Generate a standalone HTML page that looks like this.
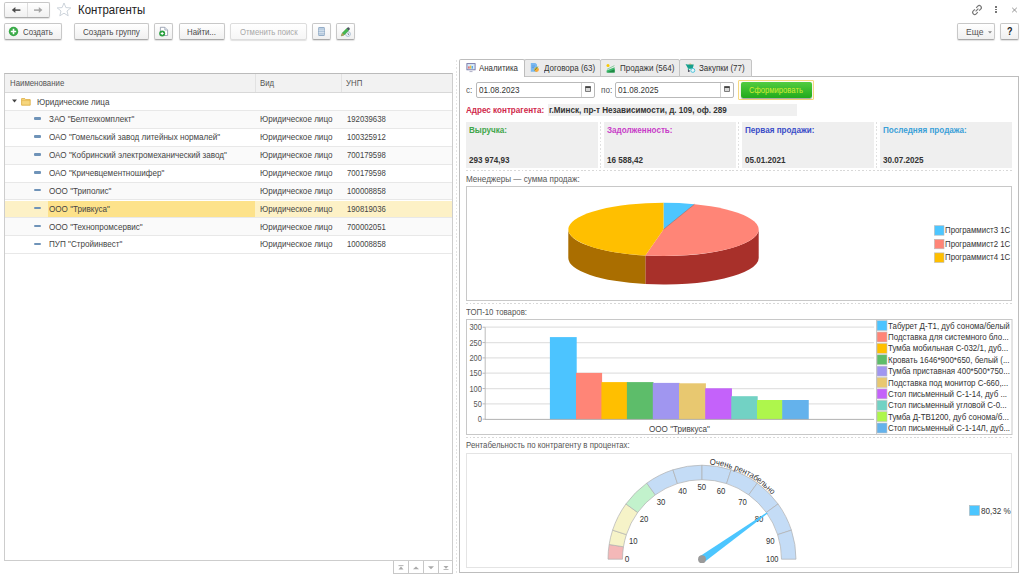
<!DOCTYPE html>
<html><head><meta charset="utf-8">
<style>
*{box-sizing:border-box;margin:0;padding:0}
html,body{width:1024px;height:578px;overflow:hidden;background:#fff;font-family:"Liberation Sans",sans-serif;font-size:8px;color:#333}
.a{position:absolute}
.btn{position:absolute;border:1px solid #c8c8c8;border-bottom-color:#aaa;border-radius:2px;background:linear-gradient(#fff,#f0f0f0);box-shadow:0 1px 1px rgba(0,0,0,.12);color:#404040;font-size:8px;line-height:14px;text-align:center;white-space:nowrap}
.t{position:absolute;white-space:nowrap;line-height:10px;font-size:9px;transform:scaleX(.9);transform-origin:0 0}
</style></head><body>

<!-- nav -->
<div class="btn" style="left:4px;top:2px;width:46px;height:16px"></div>
<div class="a" style="left:27px;top:3px;width:1px;height:14px;background:#ddd"></div>
<svg class="a" style="left:0;top:0" width="24" height="20" viewBox="0 0 24 20"><path d="M11.8 10.1L15.4 7.1V13.1Z" fill="#4a4a4a"/><rect x="14.6" y="9.35" width="5.8" height="1.5" fill="#4a4a4a"/></svg>
<svg class="a" style="left:28px;top:0" width="20" height="20" viewBox="28 0 20 20"><path d="M42.4 10.1L38.8 7.1V13.1Z" fill="#a6a6a6"/><rect x="34" y="9.35" width="5.6" height="1.5" fill="#a6a6a6"/></svg>
<svg class="a" style="left:56px;top:2.3px" width="16" height="15" viewBox="0 0 16 15"><path d="M8 1L9.9 5.6L14.8 5.9L11 9L12.2 13.8L8 11.2L3.8 13.8L5 9L1.2 5.9L6.1 5.6Z" stroke="#c4ccd4" stroke-width="0.85" fill="none"/></svg>
<div class="t" style="left:77.5px;top:3px;font-size:12px;line-height:14px;color:#222;transform:scaleX(.95)">Контрагенты</div>

<!-- top right icons -->
<svg class="a" style="left:971px;top:4px" width="12" height="12" viewBox="0 0 12 12"><g stroke="#777" stroke-width="1.2" fill="none"><path d="M5.2 3.8L6.8 2.2a1.9 1.9 0 0 1 2.9 2.9L8.1 6.7"/><path d="M6.8 8.2L5.2 9.8a1.9 1.9 0 0 1 -2.9 -2.9L3.9 5.3"/><path d="M4.6 7.4L7.4 4.6"/></g></svg>
<div class="a" style="left:995.3px;top:6.3px;width:1.6px;height:1.6px;background:#777"></div>
<div class="a" style="left:995.3px;top:8.8px;width:1.6px;height:1.6px;background:#777"></div>
<div class="a" style="left:995.3px;top:11.3px;width:1.6px;height:1.6px;background:#777"></div>
<svg class="a" style="left:1011px;top:7px" width="7" height="6" viewBox="0 0 7 6"><path d="M1.2 0.8L5.8 5.2M5.8 0.8L1.2 5.2" stroke="#888" stroke-width="0.9"/></svg>

<!-- toolbar -->
<div class="btn" style="left:4px;top:23px;width:58px;height:17px"></div>
<svg class="a" style="left:8px;top:26px" width="11" height="11" viewBox="0 0 11 11"><circle cx="5.5" cy="5.5" r="4.7" fill="#3aaa48"/><path d="M5.5 2.8V8.2M2.8 5.5H8.2" stroke="#fff" stroke-width="1.6"/></svg>
<div class="t" style="left:22.9px;top:26.3px;color:#4a4a4a;font-size:9.8px;line-height:11px;transform:scaleX(.8)">Создать</div>
<div class="btn" style="left:74px;top:23px;width:75px;height:17px"></div>
<div class="t" style="left:83px;top:26.3px;color:#4a4a4a;font-size:9.8px;line-height:11px;transform:scaleX(.82)">Создать группу</div>
<div class="btn" style="left:154px;top:23px;width:19px;height:17px"></div>
<svg class="a" style="left:157px;top:25px" width="13" height="13" viewBox="0 0 13 13"><path d="M3.4 2.3H7.8L10.6 5.1V10.5H3.4Z" fill="#fff" stroke="#8a94a6" stroke-width="0.8"/><path d="M7.8 2.3V5.1H10.6" fill="#dde3ec" stroke="#8a94a6" stroke-width="0.6"/><circle cx="5.2" cy="8.5" r="3" fill="#2aa040"/><path d="M5.2 7V10M3.7 8.5H6.7" stroke="#fff" stroke-width="1"/></svg>
<div class="btn" style="left:179px;top:23px;width:46px;height:17px"></div>
<div class="t" style="left:187.3px;top:26.3px;color:#4a4a4a;font-size:9.8px;line-height:11px;transform:scaleX(.8)">Найти...</div>
<div class="btn" style="left:230px;top:23px;width:77px;height:17px;border-color:#ddd;background:linear-gradient(#fff,#f6f6f6)"></div>
<div class="t" style="left:239.8px;top:26.3px;color:#a8a8a8;font-size:9.8px;line-height:11px;transform:scaleX(.79)">Отменить поиск</div>
<div class="btn" style="left:312px;top:23px;width:19px;height:17px"></div>
<svg class="a" style="left:318px;top:27px" width="7" height="9" viewBox="0 0 7 9"><rect x="0.4" y="0.3" width="6.2" height="8.4" rx="1.3" fill="#9fb8d2" stroke="#7a98b8" stroke-width="0.7"/><path d="M0.6 2H6.4M0.6 3.7H6.4M0.6 5.4H6.4M0.6 7.1H6.4" stroke="#eef4fa" stroke-width="0.75"/></svg>
<div class="btn" style="left:336px;top:23px;width:19px;height:17px"></div>
<svg class="a" style="left:340px;top:26px" width="12" height="12" viewBox="0 0 12 12"><circle cx="8" cy="8" r="2.4" fill="#f4f8fc" stroke="#9ab4cc" stroke-width="0.8"/><path d="M8 6.8V8.2L9 8.8" stroke="#445" stroke-width="0.6" fill="none"/><path d="M1.2 10L2.2 7L6.6 2.6L8.6 4.6L4.2 9Z" fill="#44b84e" stroke="#2f8f3a" stroke-width="0.4"/><path d="M6.6 2.6L7.6 1.6a1 1 0 0 1 1.4 0L9.6 2.2a1 1 0 0 1 0 1.4L8.6 4.6Z" fill="#4a5560"/><path d="M1.2 10L2.2 7L4.2 9Z" fill="#c8965a"/></svg>

<div class="btn" style="left:957px;top:23px;width:38px;height:17px"></div>
<div class="t" style="left:965.7px;top:27px;color:#555;font-size:9.5px">Еще</div>
<svg class="a" style="left:987.5px;top:30.5px" width="4" height="3" viewBox="0 0 4 3"><path d="M0 0.2H4L2 2.4Z" fill="#888"/></svg>
<div class="btn" style="left:1000px;top:23px;width:19px;height:17px"></div>
<div class="t" style="left:1006.5px;top:27px;font-weight:bold;font-size:10px;color:#222">?</div>

<!-- table -->
<div class="a" style="left:4px;top:73px;width:449px;height:488px;border:1px solid #cdcdcd;border-top-color:#bbb;background:#fff"></div>
<div class="a" style="left:5px;top:74px;width:447px;height:18.6px;background:#f2f2f2;border-bottom:1px solid #d8d8d8"></div>
<div class="a" style="left:255px;top:74px;width:1px;height:18px;background:#e2e2e2"></div>
<div class="a" style="left:341px;top:74px;width:1px;height:18px;background:#e2e2e2"></div>
<div class="t" style="left:10px;top:77.6px;color:#555;transform:scaleX(.87)">Наименование</div>
<div class="t" style="left:260px;top:77.6px;color:#555;transform:scaleX(.87)">Вид</div>
<div class="t" style="left:346px;top:77.6px;color:#555;transform:scaleX(.87)">УНП</div>
<svg class="a" style="left:12px;top:99px" width="5" height="4" viewBox="0 0 5 4"><path d="M0 0.5H5L2.5 3.5Z" fill="#444"/></svg>
<svg class="a" style="left:21px;top:96.5px" width="10" height="9" viewBox="0 0 10 9"><path d="M0.6 1.6H3.8L4.8 2.6H9.2V8.2H0.6Z" fill="#f6d67e" stroke="#dcaa3c" stroke-width="0.8"/><path d="M0.6 3.6H9.2" stroke="#e2b44a" stroke-width="0.6"/></svg>
<div class="t" style="left:37px;top:96.8px;color:#444">Юридические лица</div>
<div class="a" style="left:5px;top:110px;width:447px;height:1px;background:#e8e8e8"></div>
<div class="a" style="left:5px;top:111.00px;width:447px;height:16.89px;background:#fafafa"></div>
<div class="a" style="left:5px;top:127.89px;width:447px;height:1px;background:#e8e8e8"></div>
<div class="a" style="left:34px;top:117.30px;width:7px;height:2.6px;background:#6f93b8;border-radius:1px"></div>
<div class="t" style="left:49px;top:114.20px;color:#444">ЗАО "Белтехкомплект"</div>
<div class="t" style="left:260px;top:114.20px;color:#444">Юридическое лицо</div>
<div class="t" style="left:347px;top:114.20px;color:#444;transform:scaleX(.86)">192039638</div>
<div class="a" style="left:5px;top:145.78px;width:447px;height:1px;background:#e8e8e8"></div>
<div class="a" style="left:34px;top:135.19px;width:7px;height:2.6px;background:#6f93b8;border-radius:1px"></div>
<div class="t" style="left:49px;top:132.09px;color:#444">ОАО "Гомельский завод литейных нормалей"</div>
<div class="t" style="left:260px;top:132.09px;color:#444">Юридическое лицо</div>
<div class="t" style="left:347px;top:132.09px;color:#444;transform:scaleX(.86)">100325912</div>
<div class="a" style="left:5px;top:146.78px;width:447px;height:16.89px;background:#fafafa"></div>
<div class="a" style="left:5px;top:163.67px;width:447px;height:1px;background:#e8e8e8"></div>
<div class="a" style="left:34px;top:153.08px;width:7px;height:2.6px;background:#6f93b8;border-radius:1px"></div>
<div class="t" style="left:49px;top:149.98px;color:#444">ОАО "Кобринский электромеханический завод"</div>
<div class="t" style="left:260px;top:149.98px;color:#444">Юридическое лицо</div>
<div class="t" style="left:347px;top:149.98px;color:#444;transform:scaleX(.86)">700179598</div>
<div class="a" style="left:5px;top:181.56px;width:447px;height:1px;background:#e8e8e8"></div>
<div class="a" style="left:34px;top:170.97px;width:7px;height:2.6px;background:#6f93b8;border-radius:1px"></div>
<div class="t" style="left:49px;top:167.87px;color:#444">ОАО "Кричевцементношифер"</div>
<div class="t" style="left:260px;top:167.87px;color:#444">Юридическое лицо</div>
<div class="t" style="left:347px;top:167.87px;color:#444;transform:scaleX(.86)">700179598</div>
<div class="a" style="left:5px;top:182.56px;width:447px;height:16.89px;background:#fafafa"></div>
<div class="a" style="left:5px;top:199.45px;width:447px;height:1px;background:#e8e8e8"></div>
<div class="a" style="left:34px;top:188.86px;width:7px;height:2.6px;background:#6f93b8;border-radius:1px"></div>
<div class="t" style="left:49px;top:185.76px;color:#444">ООО "Триполис"</div>
<div class="t" style="left:260px;top:185.76px;color:#444">Юридическое лицо</div>
<div class="t" style="left:347px;top:185.76px;color:#444;transform:scaleX(.86)">100008858</div>
<div class="a" style="left:5px;top:200.65px;width:447px;height:15.9px;background:#fdf1c6"></div>
<div class="a" style="left:47.6px;top:200.65px;width:207.4px;height:15.9px;background:#fde28a"></div>
<div class="a" style="left:5px;top:217.34px;width:447px;height:1px;background:#e8e8e8"></div>
<div class="a" style="left:34px;top:206.75px;width:7px;height:2.6px;background:#6f93b8;border-radius:1px"></div>
<div class="t" style="left:49px;top:203.65px;color:#444">ООО "Тривкуса"</div>
<div class="t" style="left:260px;top:203.65px;color:#444">Юридическое лицо</div>
<div class="t" style="left:347px;top:203.65px;color:#444;transform:scaleX(.86)">190819036</div>
<div class="a" style="left:5px;top:218.34px;width:447px;height:16.89px;background:#fafafa"></div>
<div class="a" style="left:5px;top:235.23px;width:447px;height:1px;background:#e8e8e8"></div>
<div class="a" style="left:34px;top:224.64px;width:7px;height:2.6px;background:#6f93b8;border-radius:1px"></div>
<div class="t" style="left:49px;top:221.54px;color:#444">ООО "Технопромсервис"</div>
<div class="t" style="left:260px;top:221.54px;color:#444">Юридическое лицо</div>
<div class="t" style="left:347px;top:221.54px;color:#444;transform:scaleX(.86)">700002051</div>
<div class="a" style="left:5px;top:253.12px;width:447px;height:1px;background:#e8e8e8"></div>
<div class="a" style="left:34px;top:242.53px;width:7px;height:2.6px;background:#6f93b8;border-radius:1px"></div>
<div class="t" style="left:49px;top:239.43px;color:#444">ПУП "Стройинвест"</div>
<div class="t" style="left:260px;top:239.43px;color:#444">Юридическое лицо</div>
<div class="t" style="left:347px;top:239.43px;color:#444;transform:scaleX(.86)">100008858</div>
<div class="a" style="left:393px;top:561px;width:60px;height:13px;border:1px solid #c8c8c8;border-top:none;background:#fff"></div>
<div class="a" style="left:408px;top:561px;width:1px;height:13px;background:#c8c8c8"></div>
<div class="a" style="left:423px;top:561px;width:1px;height:13px;background:#c8c8c8"></div>
<div class="a" style="left:438px;top:561px;width:1px;height:13px;background:#c8c8c8"></div>
<svg class="a" style="left:397px;top:564px" width="8" height="6" viewBox="0 0 8 6"><path d="M1.5 1.6H6.5" stroke="#aaa" stroke-width="0.9"/><path d="M1.5 5.4L4 2.6L6.5 5.4Z" fill="#aaa"/></svg>
<svg class="a" style="left:412px;top:564px" width="8" height="6" viewBox="0 0 8 6"><path d="M1 5.2L4 2.4L7 5.2Z" fill="#aaa"/></svg>
<svg class="a" style="left:427px;top:564px" width="8" height="6" viewBox="0 0 8 6"><path d="M1 2.2L4 5.2L7 2.2Z" fill="#aaa"/></svg>
<svg class="a" style="left:442px;top:564px" width="8" height="6" viewBox="0 0 8 6"><path d="M1.5 5.6H6.5" stroke="#aaa" stroke-width="0.9"/><path d="M1.5 2L4 4.8L6.5 2Z" fill="#aaa"/></svg>
<div class="a" style="left:455.5px;top:59.5px;width:1.5px;height:515px;background:repeating-linear-gradient(#e4e4e4 0 1.8px,transparent 1.8px 3.6px)"></div>
<!-- tabs -->
<div class="a" style="left:459px;top:76px;width:560px;height:497px;border:1px solid #bdbdbd;background:#fff"></div>
<div class="a" style="left:524px;top:59px;width:77px;height:18px;border:1px solid #c4c4c4;border-radius:2px 2px 0 0;background:#ebebeb"></div>
<div class="a" style="left:600px;top:59px;width:80px;height:18px;border:1px solid #c4c4c4;border-radius:2px 2px 0 0;background:#ebebeb"></div>
<div class="a" style="left:679px;top:59px;width:73px;height:18px;border:1px solid #c4c4c4;border-radius:2px 2px 0 0;background:#ebebeb"></div>
<div class="a" style="left:459px;top:59px;width:65.5px;height:18px;border:1px solid #bdbdbd;border-bottom:none;border-radius:2px 2px 0 0;background:#fff"></div>
<div class="a" style="left:460px;top:76px;width:64px;height:2px;background:#fff"></div>
<svg class="a" style="left:465.5px;top:63px" width="10" height="10" viewBox="0 0 10 10"><rect x="0.9" y="0.6" width="8.2" height="6.2" fill="#d8ecfb" stroke="#7474a4" stroke-width="0.9"/><rect x="2.2" y="3.4" width="1.4" height="2.2" fill="#e85858"/><rect x="3.9" y="2.6" width="1.4" height="3" fill="#f0c040"/><rect x="5.6" y="3" width="1.4" height="2.6" fill="#5aa8e8"/><path d="M3.5 8.6H6.5" stroke="#9a9ab8" stroke-width="0.8"/></svg>
<div class="t" style="left:479px;top:63px;color:#333;transform:scaleX(.875)">Аналитика</div>
<svg class="a" style="left:530px;top:62px" width="10" height="11" viewBox="0 0 10 11"><path d="M0.8 1H5.4L7 2.6V9.8H0.8Z" fill="#7ab8f0"/><path d="M1.8 4H5M1.8 5.6H4" stroke="#4a90d8" stroke-width="0.6"/><circle cx="6.6" cy="7.6" r="2.3" fill="#f8a838"/><path d="M4.6 8.4L7.8 4.6" stroke="#3a9a3a" stroke-width="0.9"/></svg>
<div class="t" style="left:543.5px;top:63px;color:#333;transform:scaleX(.89)">Договора (63)</div>
<svg class="a" style="left:606px;top:63px" width="10" height="10" viewBox="0 0 10 10"><circle cx="2" cy="2.4" r="1.5" fill="#f8c800"/><path d="M0.6 9.4V7.6L8.6 4.2V9.4Z" fill="#3cb86a"/><path d="M0.6 9.4L8.6 6.2V9.4Z" fill="#1f8a44"/><path d="M1 6.4L8.4 2.6" stroke="#60c080" stroke-width="0.7" fill="none"/></svg>
<div class="t" style="left:620px;top:63px;color:#333;transform:scaleX(.89)">Продажи (564)</div>
<svg class="a" style="left:685px;top:62px" width="11" height="11" viewBox="0 0 11 11"><path d="M3.5 2.6L5 1.4L7.5 2.6Z" fill="#f8a838"/><path d="M0.5 2L2.2 2.6H8.8L7.6 6.8H3.2Z" fill="#16a08c"/><path d="M3.2 6.8L3.6 8.4" stroke="#16a08c" stroke-width="1"/><circle cx="3.8" cy="9" r="0.9" fill="#445"/><circle cx="7.8" cy="8.4" r="2" fill="#eaf6fa" stroke="#40c0d8" stroke-width="0.9"/></svg>
<div class="t" style="left:699px;top:63px;color:#333;transform:scaleX(.89)">Закупки (77)</div>
<div class="t" style="left:466px;top:85px;color:#555">с:</div>
<div class="a" style="left:476px;top:82px;width:119px;height:16px;border:1px solid #b9b9b9;border-radius:2px;background:#fff"></div>
<div class="a" style="left:581px;top:83px;width:1px;height:14px;background:#d0d0d0"></div>
<div class="t" style="left:479px;top:85px;color:#333">01.08.2023</div>
<svg class="a" style="left:585px;top:86px" width="6" height="6" viewBox="0 0 6 6"><rect x="0.4" y="0.4" width="5.2" height="5.2" rx="0.6" fill="#d6d6d6" stroke="#555" stroke-width="0.8"/><rect x="0.4" y="0.4" width="5.2" height="1.6" fill="#444"/></svg>
<div class="t" style="left:601px;top:85px;color:#555">по:</div>
<div class="a" style="left:615px;top:82px;width:119px;height:16px;border:1px solid #b9b9b9;border-radius:2px;background:#fff"></div>
<div class="a" style="left:720px;top:83px;width:1px;height:14px;background:#d0d0d0"></div>
<div class="t" style="left:618px;top:85px;color:#333">01.08.2025</div>
<svg class="a" style="left:724px;top:86px" width="6" height="6" viewBox="0 0 6 6"><rect x="0.4" y="0.4" width="5.2" height="5.2" rx="0.6" fill="#d6d6d6" stroke="#555" stroke-width="0.8"/><rect x="0.4" y="0.4" width="5.2" height="1.6" fill="#444"/></svg>
<div class="a" style="left:738px;top:79.5px;width:76px;height:20.5px;border:1px solid #f6d980;border-radius:1px;background:#fffdf4"></div>
<div class="a" style="left:740.5px;top:82px;width:71.5px;height:15.5px;border-radius:2px;background:linear-gradient(#52cc40,#22aa1c);box-shadow:0 1px 1px rgba(0,0,0,.35)"></div>
<div class="t" style="left:749px;top:84.5px;color:#d2ec34;transform:scaleX(.85)">Сформировать</div>
<div class="t" style="left:466px;top:105px;color:#d0284a;font-weight:bold">Адрес контрагента:</div>
<div class="a" style="left:548px;top:104px;width:249px;height:12px;background:#f0f0f0"></div>
<div class="t" style="left:549px;top:105px;color:#333;font-weight:bold">г.Минск, пр-т Независимости, д. 109, оф. 289</div>
<div class="a" style="left:466px;top:122px;width:132px;height:46px;background:#efefef"></div>
<div class="t" style="left:469px;top:125px;color:#3fa64a;font-weight:bold">Выручка:</div>
<div class="t" style="left:469px;top:155px;color:#333;font-weight:bold">293 974,93</div>
<div class="a" style="left:604px;top:122px;width:132px;height:46px;background:#efefef"></div>
<div class="t" style="left:607px;top:125px;color:#c83cc8;font-weight:bold">Задолженность:</div>
<div class="t" style="left:607px;top:155px;color:#333;font-weight:bold">16 588,42</div>
<div class="a" style="left:742px;top:122px;width:132px;height:46px;background:#efefef"></div>
<div class="t" style="left:745px;top:125px;color:#3a4cc8;font-weight:bold">Первая продажи:</div>
<div class="t" style="left:745px;top:155px;color:#333;font-weight:bold">05.01.2021</div>
<div class="a" style="left:880px;top:122px;width:132px;height:46px;background:#efefef"></div>
<div class="t" style="left:883px;top:125px;color:#3aa0d8;font-weight:bold">Последняя продажа:</div>
<div class="t" style="left:883px;top:155px;color:#333;font-weight:bold">30.07.2025</div>
<div class="a" style="left:600px;top:122px;width:1px;height:47px;background:repeating-linear-gradient(#e0e0e0 0 1.8px,transparent 1.8px 3.7px)"></div>
<div class="a" style="left:738px;top:122px;width:1px;height:47px;background:repeating-linear-gradient(#e0e0e0 0 1.8px,transparent 1.8px 3.7px)"></div>
<div class="a" style="left:876px;top:122px;width:1px;height:47px;background:repeating-linear-gradient(#e0e0e0 0 1.8px,transparent 1.8px 3.7px)"></div>
<div class="a" style="left:466px;top:170px;width:546px;height:1px;background:repeating-linear-gradient(90deg,#d8d8d8 0 1.8px,transparent 1.8px 3.7px)"></div>
<div class="t" style="left:466px;top:174px;color:#555">Менеджеры — сумма продаж:</div>
<div class="a" style="left:466px;top:186px;width:546px;height:115px;border:1px solid #c8c8c8;background:#fff"></div>
<div class="a" style="left:466px;top:303px;width:546px;height:1px;background:repeating-linear-gradient(90deg,#d8d8d8 0 1.8px,transparent 1.8px 3.7px)"></div>
<div class="t" style="left:466px;top:307px;color:#555;transform:scaleX(.87)">ТОП-10 товаров:</div>
<div class="a" style="left:466px;top:319px;width:546px;height:116px;border:1px solid #c8c8c8;background:#fff"></div>
<div class="a" style="left:466px;top:437.2px;width:546px;height:1px;background:repeating-linear-gradient(90deg,#d8d8d8 0 1.8px,transparent 1.8px 3.7px)"></div>
<div class="t" style="left:466px;top:440.2px;color:#555;transform:scaleX(.87)">Рентабельность по контрагенту в процентах:</div>
<div class="a" style="left:466px;top:452.5px;width:546px;height:115.5px;border:1px solid #e4e4e4;background:#fff"></div>
<!-- CHARTS -->
<svg class="a" style="left:0;top:0" width="1024" height="578" viewBox="0 0 1024 578" font-family="Liberation Sans">
<path d="M758.70 229.40 A95.2 26.6 0 0 1 645.33 255.51 L645.33 284.11 A95.2 26.6 0 0 0 758.70 258.00 Z" fill="#a8302a"/>
<path d="M645.33 255.51 A95.2 26.6 0 0 1 568.30 229.40 L568.30 258.00 A95.2 26.6 0 0 0 645.33 284.11 Z" fill="#aa6e00"/>
<path d="M663.5 229.4 L663.50 202.80 A95.2 26.6 0 0 1 694.49 204.25 Z" fill="#4dc6ff"/>
<path d="M663.5 229.4 L694.49 204.25 A95.2 26.6 0 0 1 645.33 255.51 Z" fill="#ff8577"/>
<path d="M663.5 229.4 L645.33 255.51 A95.2 26.6 0 0 1 663.50 202.80 Z" fill="#ffbf00"/>
<path d="M663.5 229.4 L694.49 204.25" stroke="#8a4a40" stroke-width="0.5"/>
<rect x="934.5" y="225.7" width="9.5" height="9.5" fill="#4dc6ff" stroke="#b8b8b8" stroke-width="0.6"/>
<rect x="934.5" y="239.3" width="9.5" height="9.5" fill="#ff8577" stroke="#b8b8b8" stroke-width="0.6"/>
<rect x="934.5" y="252.9" width="9.5" height="9.5" fill="#ffbf00" stroke="#b8b8b8" stroke-width="0.6"/>
<path d="M482.5 419.20H485" stroke="#aaa" stroke-width="0.8"/>
<path d="M485 403.87H874" stroke="#e2e2e2" stroke-width="1.2"/>
<path d="M482.5 403.87H485" stroke="#aaa" stroke-width="0.8"/>
<path d="M485 388.54H874" stroke="#e2e2e2" stroke-width="1.2"/>
<path d="M482.5 388.54H485" stroke="#aaa" stroke-width="0.8"/>
<path d="M485 373.21H874" stroke="#e2e2e2" stroke-width="1.2"/>
<path d="M482.5 373.21H485" stroke="#aaa" stroke-width="0.8"/>
<path d="M485 357.88H874" stroke="#e2e2e2" stroke-width="1.2"/>
<path d="M482.5 357.88H485" stroke="#aaa" stroke-width="0.8"/>
<path d="M485 342.55H874" stroke="#e2e2e2" stroke-width="1.2"/>
<path d="M482.5 342.55H485" stroke="#aaa" stroke-width="0.8"/>
<path d="M485 327.22H874" stroke="#e2e2e2" stroke-width="1.2"/>
<path d="M482.5 327.22H485" stroke="#aaa" stroke-width="0.8"/>
<path d="M485.2 327.2V419.5" stroke="#b4b4b4" stroke-width="0.9"/>
<rect x="549.9" y="337.1" width="26.80" height="82.30" fill="#4cc4ff"/>
<rect x="576" y="372.9" width="26.10" height="46.50" fill="#ff8577"/>
<rect x="601.4" y="382.1" width="26.20" height="37.30" fill="#ffbf00"/>
<rect x="626.9" y="382.1" width="26.60" height="37.30" fill="#5dbd6a"/>
<rect x="652.8" y="382.9" width="26.90" height="36.50" fill="#a096f0"/>
<rect x="679" y="383.3" width="26.90" height="36.10" fill="#e8c870"/>
<rect x="705.2" y="388.3" width="26.75" height="31.10" fill="#c462fa"/>
<rect x="731.25" y="396.2" width="26.45" height="23.20" fill="#72d2c4"/>
<rect x="757" y="400" width="25.90" height="19.40" fill="#aef64c"/>
<rect x="782.2" y="400" width="26.55" height="19.40" fill="#64b2ec"/>
<path d="M485 419.4H874" stroke="#a8a8a8" stroke-width="0.9"/>
<rect x="876.5" y="319.5" width="135.5" height="115" fill="#fff" stroke="#c8c8c8" stroke-width="1"/>
<rect x="877" y="320.60" width="10" height="10" fill="#4cc4ff" stroke="#c4c4c4" stroke-width="0.6"/>
<rect x="877" y="331.98" width="10" height="10" fill="#ff8577" stroke="#c4c4c4" stroke-width="0.6"/>
<rect x="877" y="343.36" width="10" height="10" fill="#ffbf00" stroke="#c4c4c4" stroke-width="0.6"/>
<rect x="877" y="354.74" width="10" height="10" fill="#5dbd6a" stroke="#c4c4c4" stroke-width="0.6"/>
<rect x="877" y="366.12" width="10" height="10" fill="#a096f0" stroke="#c4c4c4" stroke-width="0.6"/>
<rect x="877" y="377.50" width="10" height="10" fill="#e8c870" stroke="#c4c4c4" stroke-width="0.6"/>
<rect x="877" y="388.88" width="10" height="10" fill="#c462fa" stroke="#c4c4c4" stroke-width="0.6"/>
<rect x="877" y="400.26" width="10" height="10" fill="#72d2c4" stroke="#c4c4c4" stroke-width="0.6"/>
<rect x="877" y="411.64" width="10" height="10" fill="#aef64c" stroke="#c4c4c4" stroke-width="0.6"/>
<rect x="877" y="423.02" width="10" height="10" fill="#64b2ec" stroke="#c4c4c4" stroke-width="0.6"/>
<path d="M608.00 559.20 A94 94 0 0 1 609.16 544.50 L623.48 546.76 A79.5 79.5 0 0 0 622.50 559.20 Z" fill="#f4b8b8" stroke="#b0b0b0" stroke-width="0.7"/>
<path d="M609.16 544.50 A94 94 0 0 1 612.60 530.15 L626.39 534.63 A79.5 79.5 0 0 0 623.48 546.76 Z" fill="#f6f3c8" stroke="#b0b0b0" stroke-width="0.7"/>
<path d="M612.60 530.15 A94 94 0 0 1 625.95 503.95 L637.68 512.47 A79.5 79.5 0 0 0 626.39 534.63 Z" fill="#f6f3c8" stroke="#b0b0b0" stroke-width="0.7"/>
<path d="M625.95 503.95 A94 94 0 0 1 646.75 483.15 L655.27 494.88 A79.5 79.5 0 0 0 637.68 512.47 Z" fill="#c2f2cc" stroke="#b0b0b0" stroke-width="0.7"/>
<path d="M646.75 483.15 A94 94 0 0 1 672.95 469.80 L677.43 483.59 A79.5 79.5 0 0 0 655.27 494.88 Z" fill="#c4dcf6" stroke="#b0b0b0" stroke-width="0.7"/>
<path d="M672.95 469.80 A94 94 0 0 1 702.00 465.20 L702.00 479.70 A79.5 79.5 0 0 0 677.43 483.59 Z" fill="#c4dcf6" stroke="#b0b0b0" stroke-width="0.7"/>
<path d="M702.00 465.20 A94 94 0 0 1 731.05 469.80 L726.57 483.59 A79.5 79.5 0 0 0 702.00 479.70 Z" fill="#c4dcf6" stroke="#b0b0b0" stroke-width="0.7"/>
<path d="M731.05 469.80 A94 94 0 0 1 757.25 483.15 L748.73 494.88 A79.5 79.5 0 0 0 726.57 483.59 Z" fill="#c4dcf6" stroke="#b0b0b0" stroke-width="0.7"/>
<path d="M757.25 483.15 A94 94 0 0 1 778.05 503.95 L766.32 512.47 A79.5 79.5 0 0 0 748.73 494.88 Z" fill="#c4dcf6" stroke="#b0b0b0" stroke-width="0.7"/>
<path d="M778.05 503.95 A94 94 0 0 1 791.40 530.15 L777.61 534.63 A79.5 79.5 0 0 0 766.32 512.47 Z" fill="#c4dcf6" stroke="#b0b0b0" stroke-width="0.7"/>
<path d="M791.40 530.15 A94 94 0 0 1 796.00 559.20 L781.50 559.20 A79.5 79.5 0 0 0 777.61 534.63 Z" fill="#c4dcf6" stroke="#b0b0b0" stroke-width="0.7"/>
<path id="arcT" d="M709.62 464.51 A95 95 0 0 1 784.27 511.70" fill="none"/>
<text font-size="8.4" fill="#333"><textPath href="#arcT" textLength="71" lengthAdjust="spacingAndGlyphs">Очень рентабельно</textPath></text>
<text x="627" y="561.5" font-size="9" fill="#333" text-anchor="middle" textLength="4.6" lengthAdjust="spacingAndGlyphs">0</text>
<text x="633.2" y="543.5" font-size="9" fill="#333" text-anchor="middle" textLength="8.6" lengthAdjust="spacingAndGlyphs">10</text>
<text x="644" y="521.8" font-size="9" fill="#333" text-anchor="middle" textLength="8.6" lengthAdjust="spacingAndGlyphs">20</text>
<text x="661.1" y="505" font-size="9" fill="#333" text-anchor="middle" textLength="8.6" lengthAdjust="spacingAndGlyphs">30</text>
<text x="682.6" y="494" font-size="9" fill="#333" text-anchor="middle" textLength="8.6" lengthAdjust="spacingAndGlyphs">40</text>
<text x="701.8" y="490.2" font-size="9" fill="#333" text-anchor="middle" textLength="8.6" lengthAdjust="spacingAndGlyphs">50</text>
<text x="721" y="494" font-size="9" fill="#333" text-anchor="middle" textLength="8.6" lengthAdjust="spacingAndGlyphs">60</text>
<text x="742.6" y="505.2" font-size="9" fill="#333" text-anchor="middle" textLength="8.6" lengthAdjust="spacingAndGlyphs">70</text>
<text x="759" y="521.8" font-size="9" fill="#333" text-anchor="middle" textLength="8.6" lengthAdjust="spacingAndGlyphs">80</text>
<text x="770.2" y="543.6" font-size="9" fill="#333" text-anchor="middle" textLength="8.6" lengthAdjust="spacingAndGlyphs">90</text>
<text x="772.2" y="561.7" font-size="9" fill="#333" text-anchor="middle" textLength="12.4" lengthAdjust="spacingAndGlyphs">100</text>
<path d="M704.14 562.22 L767.60 513.57 L766.80 512.43 L699.86 556.18 Z" fill="#4cc6ff"/>
<circle cx="702" cy="559.2" r="3.9" fill="#9a9a9a"/>
<rect x="969.5" y="505.6" width="10" height="9.8" fill="#4cc6ff" stroke="#aaa" stroke-width="0.5"/>
</svg>
<div class="t" style="left:944.5px;top:225.2px;color:#333;transform:scaleX(.872)">Программист3 1С</div>
<div class="t" style="left:944.5px;top:238.8px;color:#333;transform:scaleX(.872)">Программист2 1С</div>
<div class="t" style="left:944.5px;top:252.4px;color:#333;transform:scaleX(.872)">Программист4 1С</div>
<div class="t" style="left:888px;top:320.6px;color:#333;transform:scaleX(.883)">Табурет Д-Т1, дуб сонома/белый</div>
<div class="t" style="left:888px;top:332.0px;color:#333;transform:scaleX(.883)">Подставка для системного бло...</div>
<div class="t" style="left:888px;top:343.4px;color:#333;transform:scaleX(.883)">Тумба мобильная С-032/1, дуб...</div>
<div class="t" style="left:888px;top:354.7px;color:#333;transform:scaleX(.883)">Кровать 1646*900*650, белый (...</div>
<div class="t" style="left:888px;top:366.1px;color:#333;transform:scaleX(.883)">Тумба приставная 400*500*750...</div>
<div class="t" style="left:888px;top:377.5px;color:#333;transform:scaleX(.883)">Подставка под монитор С-660,...</div>
<div class="t" style="left:888px;top:388.9px;color:#333;transform:scaleX(.883)">Стол письменный С-1-14, дуб ...</div>
<div class="t" style="left:888px;top:400.3px;color:#333;transform:scaleX(.883)">Стол письменный угловой С-0...</div>
<div class="t" style="left:888px;top:411.6px;color:#333;transform:scaleX(.883)">Тумба Д-ТВ1200, дуб сонома/б...</div>
<div class="t" style="left:888px;top:423.0px;color:#333;transform:scaleX(.883)">Стол письменный С-1-14Л, дуб...</div>
<div class="t" style="left:451.7px;width:36px;top:414.2px;color:#555;text-align:right;transform:scaleX(.83)">0</div>
<div class="t" style="left:451.7px;width:36px;top:398.9px;color:#555;text-align:right;transform:scaleX(.83)">50</div>
<div class="t" style="left:451.7px;width:36px;top:383.5px;color:#555;text-align:right;transform:scaleX(.83)">100</div>
<div class="t" style="left:451.7px;width:36px;top:368.2px;color:#555;text-align:right;transform:scaleX(.83)">150</div>
<div class="t" style="left:451.7px;width:36px;top:352.9px;color:#555;text-align:right;transform:scaleX(.83)">200</div>
<div class="t" style="left:451.7px;width:36px;top:337.5px;color:#555;text-align:right;transform:scaleX(.83)">250</div>
<div class="t" style="left:451.7px;width:36px;top:322.2px;color:#555;text-align:right;transform:scaleX(.83)">300</div>
<div class="t" style="left:649px;top:424px;color:#444">ООО "Тривкуса"</div>
<div class="t" style="left:980.5px;top:505.5px;color:#333">80,32 %</div>
</body></html>
